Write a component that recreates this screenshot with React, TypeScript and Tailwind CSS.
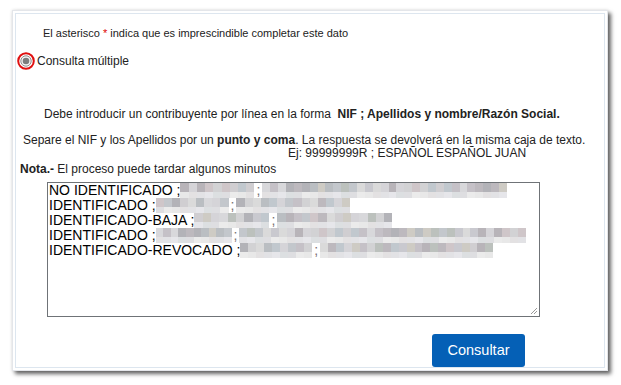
import React from "react";

const PALETTE = [
  "#c9c9cf", "#bdb9be", "#d2d2d4", "#c3c7cc", "#d8d8db", "#b8b4b9",
  "#cecbc4", "#c1c8ce", "#dadada", "#b3b3b8", "#cfc6c9", "#bcc1bd",
  "#c5c1c7", "#d5d4d8", "#babec2", "#d0ced1",
];
const PALE = ["#e2e2e5", "#e8e8e8", "#dedee1", "#e6e6ea", "#e3e1e2", "#ebebeb", "#dcdfe1"];

function Blur({ w, seed }: { w: number; seed: number }) {
  const n = Math.max(1, Math.round(w / 8));
  const cw = w / n;
  const cells = Array.from({ length: n });
  return (
    <span className="inline-flex flex-col h-[15px]">
      <span className="flex h-[9px]">
        {cells.map((_, i) => (
          <span
            key={i}
            style={{ width: cw, background: PALETTE[(i * 7 + seed * 5 + ((i * seed) % 3)) % PALETTE.length] }}
          />
        ))}
      </span>
      <span className="flex h-[6px]">
        {cells.map((_, i) => (
          <span key={i} style={{ width: cw, background: PALE[(i * 3 + seed) % PALE.length] }} />
        ))}
      </span>
    </span>
  );
}

function Line({ label, a, b, seed }: { label: string; a: number; b: number; seed: number }) {
  return (
    <div className="flex items-center whitespace-pre h-[15px]">
      <span>{label}</span>
      <Blur w={a} seed={seed} />
      <span className="text-[#7a6f70] px-[2px]">;</span>
      <Blur w={b} seed={seed + 3} />
    </div>
  );
}

export default function App() {
  return (
    <div className="w-[621px] h-[385px] bg-white pt-[10px] pl-[12px]" style={{ fontFamily: '"Liberation Sans", Arial, sans-serif' }}>
      <div className="w-[596px] h-[361px] border border-[#e4e6ea] p-[2px] bg-white shadow-[3px_3px_4px_rgba(0,0,0,0.6),0_0_3px_rgba(0,0,0,0.12)]">
        <div className="h-full border border-[#dde6ef] flex flex-col text-[#222]">
          <p className="mt-[13px] pl-[27px] text-[11px] leading-[13px]">
            El asterisco <span className="text-[#e00000]">*</span> indica que es imprescindible completar este dato
          </p>
          <div className="mt-[12px] flex items-center h-[18px] pl-[1px]">
            <svg width="18" height="18" viewBox="0 0 18 18">
              <circle cx="9" cy="9" r="7.8" fill="none" stroke="#e01010" strokeWidth="2" />
              <circle cx="9" cy="9" r="5.2" fill="#f4f4f4" stroke="#8d8d8d" strokeWidth="1" />
              <circle cx="9" cy="9" r="3.3" fill="#7d7d7d" />
            </svg>
            <span className="ml-[2px] text-[12px] leading-[18px] text-[#222]">Consulta múltiple</span>
          </div>
          <p className="mt-[37px] pl-[28px] text-[12px] leading-[14px] whitespace-pre">
            {"Debe introducir un contribuyente por línea en la forma  "}
            <b>NIF ; Apellidos y nombre/Razón Social.</b>
          </p>
          <p className="mt-[13px] pl-[7px] text-[12px] leading-[13px]">
            Separe el NIF y los Apellidos por un <b>punto y coma</b>. La respuesta se devolverá en la misma caja de texto.
          </p>
          <p className="pl-[272px] text-[12px] leading-[13px]">Ej: 99999999R ; ESPAÑOL ESPAÑOL JUAN</p>
          <p className="mt-[2px] pl-[4px] text-[12px] leading-[14px]">
            <b>Nota.-</b> El proceso puede tardar algunos minutos
          </p>
          <div className="relative mt-[6px] ml-[31px] w-[493px] h-[135px] border border-[#6f7377] bg-white pl-[1px] text-[14px] leading-[15px] text-black">
            <Line label="NO IDENTIFICADO ;" a={74} b={245} seed={1} />
            <Line label="IDENTIFICADO ;" a={73} b={114} seed={2} />
            <Line label="IDENTIFICADO-BAJA ;" a={75} b={115} seed={3} />
            <Line label="IDENTIFICADO ;" a={76} b={287} seed={4} />
            <Line label="IDENTIFICADO-REVOCADO ;" a={72} b={173} seed={5} />
            <svg className="absolute right-[1px] bottom-[1px]" width="8" height="8" viewBox="0 0 8 8">
              <line x1="7" y1="1" x2="1" y2="7" stroke="#999" strokeWidth="1" />
              <line x1="7" y1="4" x2="4" y2="7" stroke="#999" strokeWidth="1" />
            </svg>
          </div>
          <button className="mt-[17px] ml-[416px] w-[93px] h-[33px] rounded-[3px] bg-[#0560b6] text-white text-[14.5px] leading-[33px]">
            Consultar
          </button>
        </div>
      </div>
    </div>
  );
}
